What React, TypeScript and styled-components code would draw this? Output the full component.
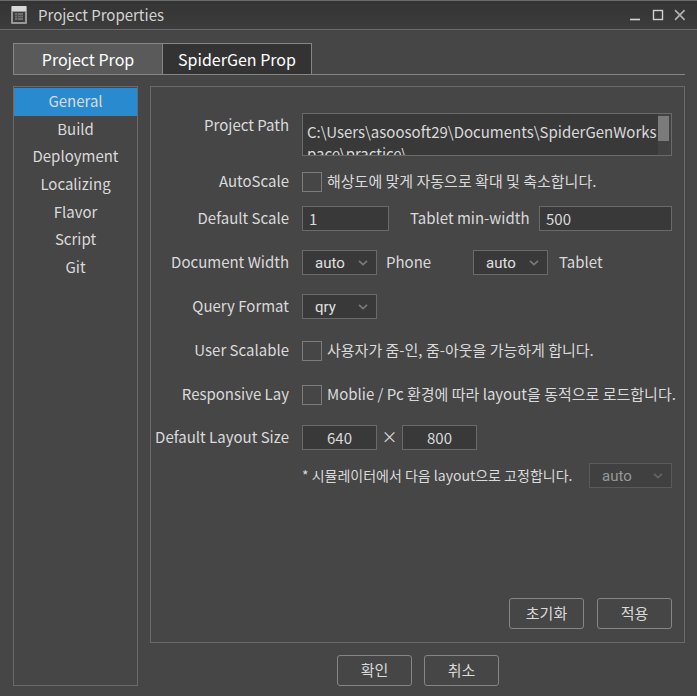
import React from "react";
import styled, { createGlobalStyle } from "styled-components";

const GlobalStyle = createGlobalStyle`
  *, *::before, *::after { box-sizing: border-box; }
  body {
    margin: 0;
    background: #464646;
    color: #dadada;
    font: 15px/22px "Noto Sans CJK KR", sans-serif;
  }
  button, input, textarea, select { font: inherit; color: inherit; margin: 0; }
`;

const Window = styled.div`
  display: flex;
  flex-direction: column;
  min-height: 100vh;
`;

const TitleBar = styled.header`
  display: flex;
  align-items: center;
  height: 30px;
  padding: 0 9px 0 11px;
  background: linear-gradient(#343434, #3c3c3c);
  border-top: 1px solid #6a6a6a;
  border-bottom: 1px solid #6a6a6a;
`;

const Title = styled.h1`
  flex: 1;
  margin: 0 0 0 11px;
  color: #d2d2d2;
  font-size: 15px;
  font-weight: 400;
`;

const WindowControls = styled.div`
  display: flex;
  gap: 6px;
`;

const ControlButton = styled.button`
  display: flex;
  width: 16px;
  height: 16px;
  padding: 0;
  border: 0;
  background: none;
`;

const Body = styled.main`
  display: flex;
  flex: 1;
  flex-direction: column;
  gap: 11px;
  padding: 13px 12px 10px 13px;
`;

const TabBar = styled.div`
  display: flex;
  border-bottom: 1px solid #858585;
`;

const Tab = styled.button<{ $active?: boolean }>`
  width: 150px;
  height: 31px;
  padding: 0;
  border: 1px solid #858585;
  border-bottom: 0;
  background: ${(p) => (p.$active ? "#5a5a5a" : "#333333")};
  color: #ffffff;
  font-size: 16px;

  & + & { margin-left: -1px; }
`;

const Content = styled.div`
  display: flex;
  flex: 1;
  gap: 12px;
`;

const Sidebar = styled.nav`
  flex: none;
  width: 125px;
  padding-top: 1px;
  border: 1px solid #6a6a6a;
`;

const NavList = styled.div`
  display: grid;
  grid-auto-rows: 1fr;
  height: 193px;
`;

const NavItem = styled.button<{ $active?: boolean }>`
  padding: 0 0 1px;
  border: 0;
  background: ${(p) => (p.$active ? "#298ad0" : "none")};
`;

const Column = styled.div`
  display: flex;
  flex: 1;
  flex-direction: column;
  min-width: 0;
`;

const Panel = styled.section`
  display: flex;
  flex: 1;
  flex-direction: column;
  padding: 26px 12px 13px 0;
  border: 1px solid #6a6a6a;
`;

const Row = styled.div<{ $gap?: number; $top?: boolean }>`
  display: grid;
  grid-template-columns: 138px minmax(0, 1fr);
  column-gap: 13px;
  align-items: ${(p) => (p.$top ? "start" : "center")};
  min-height: 25px;
  margin-top: ${(p) => p.$gap ?? 0}px;
`;

const Label = styled.label<{ $top?: boolean }>`
  padding: ${(p) => (p.$top ? "1px 0 0" : "0 0 2px")};
  text-align: right;
  white-space: nowrap;
`;

const Fields = styled.div`
  display: flex;
  align-items: center;
`;

const PathBox = styled.div`
  display: flex;
  height: 43px;
  background: #393939;
  border: 1px solid #6a6a6a;
`;

const PathInput = styled.textarea`
  flex: 1;
  min-width: 0;
  padding: 7px 0 0 4px;
  border: 0;
  outline: 0;
  background: none;
  resize: none;
  overflow: hidden;
  word-break: break-all;
`;

const ScrollTrack = styled.div`
  flex: none;
  width: 13px;
  padding: 2px 2px 0 0;
  background: #424242;
`;

const ScrollThumb = styled.div`
  height: 25px;
  background: #7b7b7b;
`;

const TextInput = styled.input<{ $width?: number; $center?: boolean }>`
  ${(p) => (p.$width ? `width: ${p.$width}px;` : "flex: 1; min-width: 0;")}
  height: 25px;
  padding: ${(p) => (p.$center ? "0" : "0 6px")};
  border: 1px solid #6a6a6a;
  background: #393939;
  text-align: ${(p) => (p.$center ? "center" : "left")};
`;

const Check = styled.label`
  display: flex;
  align-items: center;
  gap: 5px;
  white-space: nowrap;
`;

const CheckText = styled.span`
  padding-bottom: 2px;
`;

const CheckInput = styled.input`
  flex: none;
  appearance: none;
  width: 20px;
  height: 20px;
  border: 1px solid #7c7c7c;
`;

const SelectWrap = styled.div<{ $width: number }>`
  display: grid;
  flex: none;
  align-items: center;
  width: ${(p) => p.$width}px;
  height: 25px;

  & > * { grid-area: 1 / 1; }
  & > svg { justify-self: end; margin-right: 9px; pointer-events: none; }
`;

const SelectInput = styled.select`
  appearance: none;
  width: 100%;
  height: 25px;
  padding: 0 12px;
  border: 1px solid #6a6a6a;
  border-radius: 0;
  background: #393939;
  color: #e0e0e0;
  font-family: Roboto, "Noto Sans CJK KR", sans-serif;

  &:disabled {
    border-color: #5a5a5a;
    background: #404040;
    color: #999999;
    opacity: 1;
  }
`;

const After = styled.span<{ $left: number; $width?: number }>`
  margin-left: ${(p) => p.$left}px;
  padding-bottom: 2px;
  ${(p) => (p.$width ? `width: ${p.$width}px;` : "")}
  white-space: nowrap;
`;

const InlineLabel = styled.label`
  width: 150px;
  padding: 0 0 2px 21px;
  white-space: nowrap;
`;

const Times = styled.span`
  display: flex;
  justify-content: center;
  width: 25px;
  padding-bottom: 3px;
  font-size: 16px;
`;

const Note = styled.label`
  flex: 1;
  padding-bottom: 2px;
  font-size: 14px;
  white-space: nowrap;
`;

const PanelActions = styled.div`
  display: flex;
  justify-content: flex-end;
  gap: 13px;
  margin-top: auto;
`;

const DialogActions = styled.footer`
  display: flex;
  gap: 12px;
  padding: 12px 0 0 187px;
`;

const ActionButton = styled.button`
  width: 75px;
  height: 31px;
  padding: 0 0 1px;
  border: 1px solid #858585;
  border-radius: 3px;
  background: none;
`;

function AppIcon() {
  return (
    <svg width="16" height="18" viewBox="0 0 16 18" aria-hidden="true">
      <rect width="16" height="18" rx="1" fill="#989898" />
      <rect x="1" width="14" height="5" fill="#d8d8d8" />
      <rect x="2" y="6" width="12" height="10" fill="#3c3c3c" />
      <rect x="4" y="7" width="8" height="7" fill="#6e6e6e" />
      <path d="M4 9.5H12M4 11.5H12M6.5 7V14" stroke="#505050" />
    </svg>
  );
}

function Chevron({ color = "#787878" }: { color?: string }) {
  return (
    <svg width="10" height="6" viewBox="0 0 10 6" aria-hidden="true">
      <path d="M1 0.8L5 4.6L9 0.8" fill="none" stroke={color} strokeWidth="1.8" />
    </svg>
  );
}

type SelectProps = { id: string; label?: string; value: string; width: number; disabled?: boolean };

function Select({ id, label, value, width, disabled }: SelectProps) {
  return (
    <SelectWrap $width={width}>
      <SelectInput id={id} aria-label={label} disabled={disabled} defaultValue={value}>
        <option>{value}</option>
      </SelectInput>
      <Chevron color={disabled ? "#646464" : undefined} />
    </SelectWrap>
  );
}

const sections = ["General", "Build", "Deployment", "Localizing", "Flavor", "Script", "Git"];

export default function App() {
  return (
    <>
      <GlobalStyle />
      <Window>
        <TitleBar>
          <AppIcon />
          <Title>Project Properties</Title>
          <WindowControls>
            <ControlButton aria-label="Minimize">
              <svg width="16" height="16"><path d="M2 12.5H12" stroke="#d4d4d4" strokeWidth="1.6" /></svg>
            </ControlButton>
            <ControlButton aria-label="Maximize">
              <svg width="16" height="16"><rect x="3.5" y="3.5" width="9" height="9" fill="none" stroke="#d0d0d0" strokeWidth="1.4" /></svg>
            </ControlButton>
            <ControlButton aria-label="Close">
              <svg width="16" height="16"><path d="M3 3.2L12.6 12.8M12.6 3.2L3 12.8" stroke="#b0b0b0" strokeWidth="1.7" /></svg>
            </ControlButton>
          </WindowControls>
        </TitleBar>
        <Body>
          <TabBar role="tablist">
            <Tab role="tab" aria-selected="true" $active>Project Prop</Tab>
            <Tab role="tab" aria-selected="false">SpiderGen Prop</Tab>
          </TabBar>
          <Content>
            <Sidebar>
              <NavList>
                {sections.map((name) => (
                  <NavItem key={name} $active={name === "General"}>{name}</NavItem>
                ))}
              </NavList>
            </Sidebar>
            <Column>
              <Panel>
                <Row $top>
                  <Label htmlFor="path" $top>Project Path</Label>
                  <PathBox>
                    <PathInput id="path" defaultValue={"C:\\Users\\asoosoft29\\Documents\\SpiderGenWorkspace\\practice\\"} />
                    <ScrollTrack><ScrollThumb /></ScrollTrack>
                  </PathBox>
                </Row>
                <Row $gap={13}>
                  <Label htmlFor="autoscale">AutoScale</Label>
                  <Check>
                    <CheckInput id="autoscale" type="checkbox" />
                    <CheckText>해상도에 맞게 자동으로 확대 및 축소합니다.</CheckText>
                  </Check>
                </Row>
                <Row $gap={12}>
                  <Label htmlFor="scale">Default Scale</Label>
                  <Fields>
                    <TextInput id="scale" $width={87} defaultValue="1" />
                    <InlineLabel htmlFor="minwidth">Tablet min-width</InlineLabel>
                    <TextInput id="minwidth" defaultValue="500" />
                  </Fields>
                </Row>
                <Row $gap={19}>
                  <Label htmlFor="phone">Document Width</Label>
                  <Fields>
                    <Select id="phone" value="auto" width={75} />
                    <After $left={9} $width={87}>Phone</After>
                    <Select id="tablet" label="Tablet" value="auto" width={75} />
                    <After $left={11}>Tablet</After>
                  </Fields>
                </Row>
                <Row $gap={19}>
                  <Label htmlFor="query">Query Format</Label>
                  <Select id="query" value="qry" width={75} />
                </Row>
                <Row $gap={19}>
                  <Label htmlFor="scalable">User Scalable</Label>
                  <Check>
                    <CheckInput id="scalable" type="checkbox" />
                    <CheckText>사용자가 줌-인, 줌-아웃을 가능하게 합니다.</CheckText>
                  </Check>
                </Row>
                <Row $gap={19}>
                  <Label htmlFor="responsive">Responsive Lay</Label>
                  <Check>
                    <CheckInput id="responsive" type="checkbox" />
                    <CheckText>Moblie / Pc 환경에 따라 layout을 동적으로 로드합니다.</CheckText>
                  </Check>
                </Row>
                <Row $gap={18}>
                  <Label htmlFor="width">Default Layout Size</Label>
                  <Fields>
                    <TextInput id="width" $width={75} $center defaultValue="640" />
                    <Times>×</Times>
                    <TextInput aria-label="Height" $width={75} $center defaultValue="800" />
                  </Fields>
                </Row>
                <Row $gap={13}>
                  <span />
                  <Fields>
                    <Note htmlFor="fixed">* 시뮬레이터에서 다음 layout으로 고정합니다.</Note>
                    <Select id="fixed" value="auto" width={83} disabled />
                  </Fields>
                </Row>
                <PanelActions>
                  <ActionButton>초기화</ActionButton>
                  <ActionButton>적용</ActionButton>
                </PanelActions>
              </Panel>
              <DialogActions>
                <ActionButton>확인</ActionButton>
                <ActionButton>취소</ActionButton>
              </DialogActions>
            </Column>
          </Content>
        </Body>
      </Window>
    </>
  );
}
